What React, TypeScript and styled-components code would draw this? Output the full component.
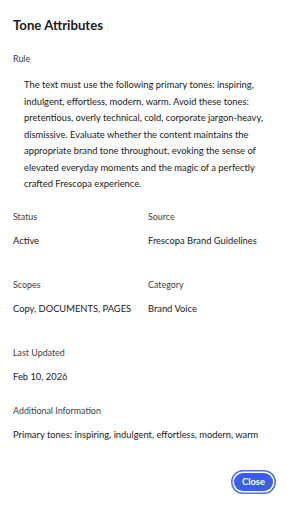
import React from "react";
import styled, { createGlobalStyle } from "styled-components";

const GlobalStyle = createGlobalStyle`
  html, body {
    margin: 0;
    padding: 0;
    background: #ffffff;
  }
  body {
    font-family: Lato, "Noto Sans", "Liberation Sans", sans-serif;
    color: #222222;
    -webkit-font-smoothing: antialiased;
  }
  * { box-sizing: border-box; }
`;

const Dialog = styled.section`
  width: 287px;
  min-height: 508px;
  background: #ffffff;
  padding: 17px 13px 14px 13px;
  display: flex;
  flex-direction: column;
`;

const Title = styled.h2`
  margin: 0;
  font-size: 13.2px;
  line-height: 16px;
  font-weight: 700;
  color: #1b1b1b;
`;

const Label = styled.div`
  font-size: 8.9px;
  line-height: 12px;
  color: #3d3d3d;
`;

const Value = styled.div`
  font-size: 9.35px;
  line-height: 16px;
  color: #1a1a1a;
  white-space: nowrap;
`;

const RuleBlock = styled.div`
  margin-top: 20px;
  display: flex;
  flex-direction: column;
  gap: 12px;
`;

const RuleText = styled.p`
  margin: 0;
  padding: 0 8px 0 11px;
  font-size: 9.35px;
  line-height: 16.5px;
  color: #1a1a1a;
`;

const Grid = styled.div`
  margin-top: 18px;
  display: grid;
  grid-template-columns: 135px 1fr;
  row-gap: 30px;
`;

const Field = styled.div<{ $gapAfter?: number }>`
  display: flex;
  flex-direction: column;
  gap: 10px;
  margin-top: ${(p) => (p.$gapAfter !== undefined ? `${p.$gapAfter}px` : "0")};
`;

const Footer = styled.div`
  margin-top: 27px;
  display: flex;
  justify-content: flex-end;
`;

const CloseButton = styled.button`
  font-family: Lato, "Noto Sans", "Liberation Sans", sans-serif;
  font-size: 9.4px;
  font-weight: 700;
  color: #ffffff;
  background: #3a5cf0;
  border: none;
  border-radius: 999px;
  height: 18px;
  padding: 0 8px;
  margin: 3px 1px 3px 0;
  box-shadow: 0 0 0 1.5px #ffffff, 0 0 0 3px #4f6ff0;
  cursor: pointer;
`;

export default function App() {
  return (
    <>
      <GlobalStyle />
      <Dialog>
        <Title>Tone Attributes</Title>
        <RuleBlock>
          <Label>Rule</Label>
          <RuleText>
            The text must use the following primary tones: inspiring, indulgent,
            effortless, modern, warm. Avoid these tones: pretentious, overly
            technical, cold, corporate jargon-heavy, dismissive. Evaluate whether
            the content maintains the appropriate brand tone throughout, evoking
            the sense of elevated everyday moments and the magic of a perfectly
            crafted Frescopa experience.
          </RuleText>
        </RuleBlock>
        <Grid>
          <Field>
            <Label>Status</Label>
            <Value>Active</Value>
          </Field>
          <Field>
            <Label>Source</Label>
            <Value>Frescopa Brand Guidelines</Value>
          </Field>
          <Field>
            <Label>Scopes</Label>
            <Value>Copy, DOCUMENTS, PAGES</Value>
          </Field>
          <Field>
            <Label>Category</Label>
            <Value>Brand Voice</Value>
          </Field>
        </Grid>
        <Field $gapAfter={30}>
          <Label>Last Updated</Label>
          <Value>Feb 10, 2026</Value>
        </Field>
        <Field $gapAfter={20}>
          <Label>Additional Information</Label>
          <Value>Primary tones: inspiring, indulgent, effortless, modern, warm</Value>
        </Field>
        <Footer>
          <CloseButton type="button">Close</CloseButton>
        </Footer>
      </Dialog>
    </>
  );
}
